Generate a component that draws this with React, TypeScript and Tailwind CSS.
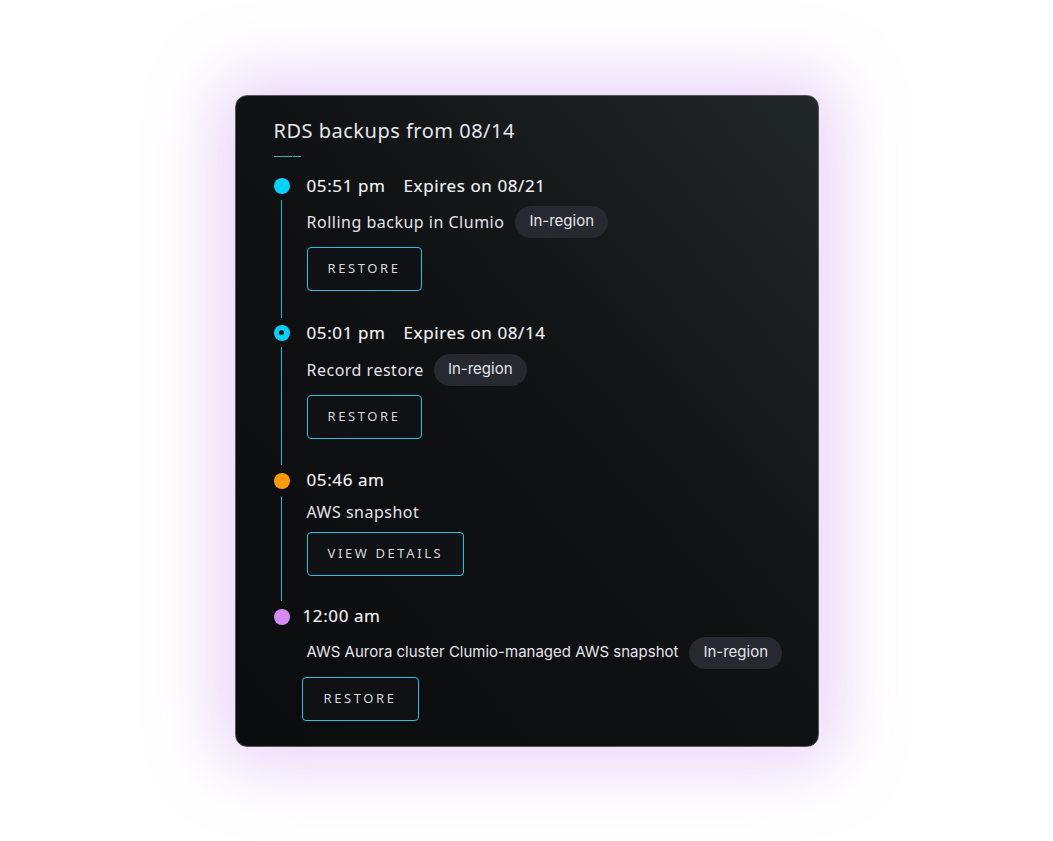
import React from "react";

const noto = { fontFamily: '"Noto Sans", sans-serif' };

function Pill() {
  return (
    <span
      className="inline-flex h-8 items-center rounded-full bg-[#262930] px-[14px] text-[15px] tracking-normal text-[#e4e4ea]"
      style={{ fontFamily: "Inter, sans-serif" }}
    >
      In-region
    </span>
  );
}

function Btn({ label, className = "" }: { label: string; className?: string }) {
  return (
    <button
      className={
        "flex h-11 items-center rounded-[4px] border border-[#1ec3e6] bg-[#101114] px-5 text-[13px] tracking-[2.6px] text-[#d6d6de] " +
        className
      }
      style={noto}
    >
      {label}
    </button>
  );
}

function Line({ mt }: { mt: string }) {
  return <span className={"mb-[3px] ml-[7px] w-px flex-1 bg-[#17b8dc] " + mt} />;
}

function Time({ children, className = "" }: { children: React.ReactNode; className?: string }) {
  return (
    <div
      className={
        "flex h-6 items-center gap-[18px] text-[17px] tracking-[0.6px] text-[#f2f2f4] [-webkit-text-stroke:0.15px_#f2f2f4] " +
        className
      }
    >
      {children}
    </div>
  );
}

export default function App() {
  return (
    <div className="flex h-[841px] w-full items-center justify-center bg-white">
      <div
        className="flex h-[652px] w-[584px] flex-col rounded-[12px] border border-[#55575c] bg-gradient-to-tr from-[#0b0c0e] via-[#0f1112] to-[#222728] pl-[38px] pr-6 pt-[21px] shadow-[0_0_70px_18px_rgba(200,150,235,0.42)]"
        style={noto}
      >
        <h1 className="text-[20px] leading-7 tracking-[0.5px] text-[#e6e6ec]">RDS backups from 08/14</h1>
        <div className="mt-[11px] flex gap-px">
          <span className="h-px w-[8.5px] bg-[#19b9dc]" />
          <span className="h-px w-[8.5px] bg-[#19b9dc]" />
          <span className="h-px w-[8.5px] bg-[#19b9dc]" />
        </div>

        <div className="mt-[17px] flex flex-col">
          {/* item 1 */}
          <div className="flex gap-[17px]">
            <div className="flex w-4 flex-col items-start pt-1">
              <span className="h-4 w-4 rounded-full bg-[#00d2fc]" />
              <Line mt="mt-[6px]" />
            </div>
            <div className="flex flex-col pb-[30px]">
              <Time>
                <span>05:51 pm</span>
                <span>Expires on 08/21</span>
              </Time>
              <div className="mt-2 flex items-center gap-[11px] text-[16px] tracking-[0.5px] text-[#e4e4ea]">
                <span>Rolling backup in Clumio</span>
                <Pill />
              </div>
              <div className="mt-[9px] flex">
                <Btn label="RESTORE" />
              </div>
            </div>
          </div>

          {/* item 2 */}
          <div className="flex gap-[17px]">
            <div className="flex w-4 flex-col items-start pt-1">
              <span className="flex h-4 w-4 items-center justify-center rounded-full bg-[#00d2fc]">
                <span className="h-[5px] w-[5px] rounded-full bg-[#0b0c0e]" />
              </span>
              <Line mt="mt-[6px]" />
            </div>
            <div className="flex flex-col pb-[29px]">
              <Time>
                <span>05:01 pm</span>
                <span>Expires on 08/14</span>
              </Time>
              <div className="mt-[9px] flex items-center gap-[10px] text-[16px] tracking-[0.5px] text-[#e4e4ea]">
                <span>Record restore</span>
                <Pill />
              </div>
              <div className="mt-[9px] flex">
                <Btn label="RESTORE" />
              </div>
            </div>
          </div>

          {/* item 3 */}
          <div className="flex gap-[17px]">
            <div className="flex w-4 flex-col items-start pt-[5px]">
              <span className="h-4 w-4 rounded-full bg-[#ff9a00]" />
              <Line mt="mt-[8px]" />
            </div>
            <div className="flex flex-col pb-[28px]">
              <Time>
                <span>05:46 am</span>
              </Time>
              <div className="mt-2 flex h-6 items-center text-[16px] tracking-[0.5px] text-[#e4e4ea]">
                <span>AWS snapshot</span>
              </div>
              <div className="mt-2 flex">
                <Btn label="VIEW DETAILS" />
              </div>
            </div>
          </div>

          {/* item 4 */}
          <div className="flex gap-[17px]">
            <div className="flex w-4 flex-col items-start pt-[5px]">
              <span className="h-4 w-4 rounded-full bg-[#d68cf2]" />
            </div>
            <div className="flex flex-col">
              <Time className="-ml-1">
                <span>12:00 am</span>
              </Time>
              <div
                className="mt-[9px] flex items-center gap-[11px] text-[15px] text-[#e4e4ea]"
                style={{ fontFamily: "Inter, sans-serif" }}
              >
                <span>AWS Aurora cluster Clumio-managed AWS snapshot</span>
                <Pill />
              </div>
              <div className="mt-2 flex">
                <Btn label="RESTORE" className="-ml-[5px] px-[21px]" />
              </div>
            </div>
          </div>
        </div>
      </div>
    </div>
  );
}
